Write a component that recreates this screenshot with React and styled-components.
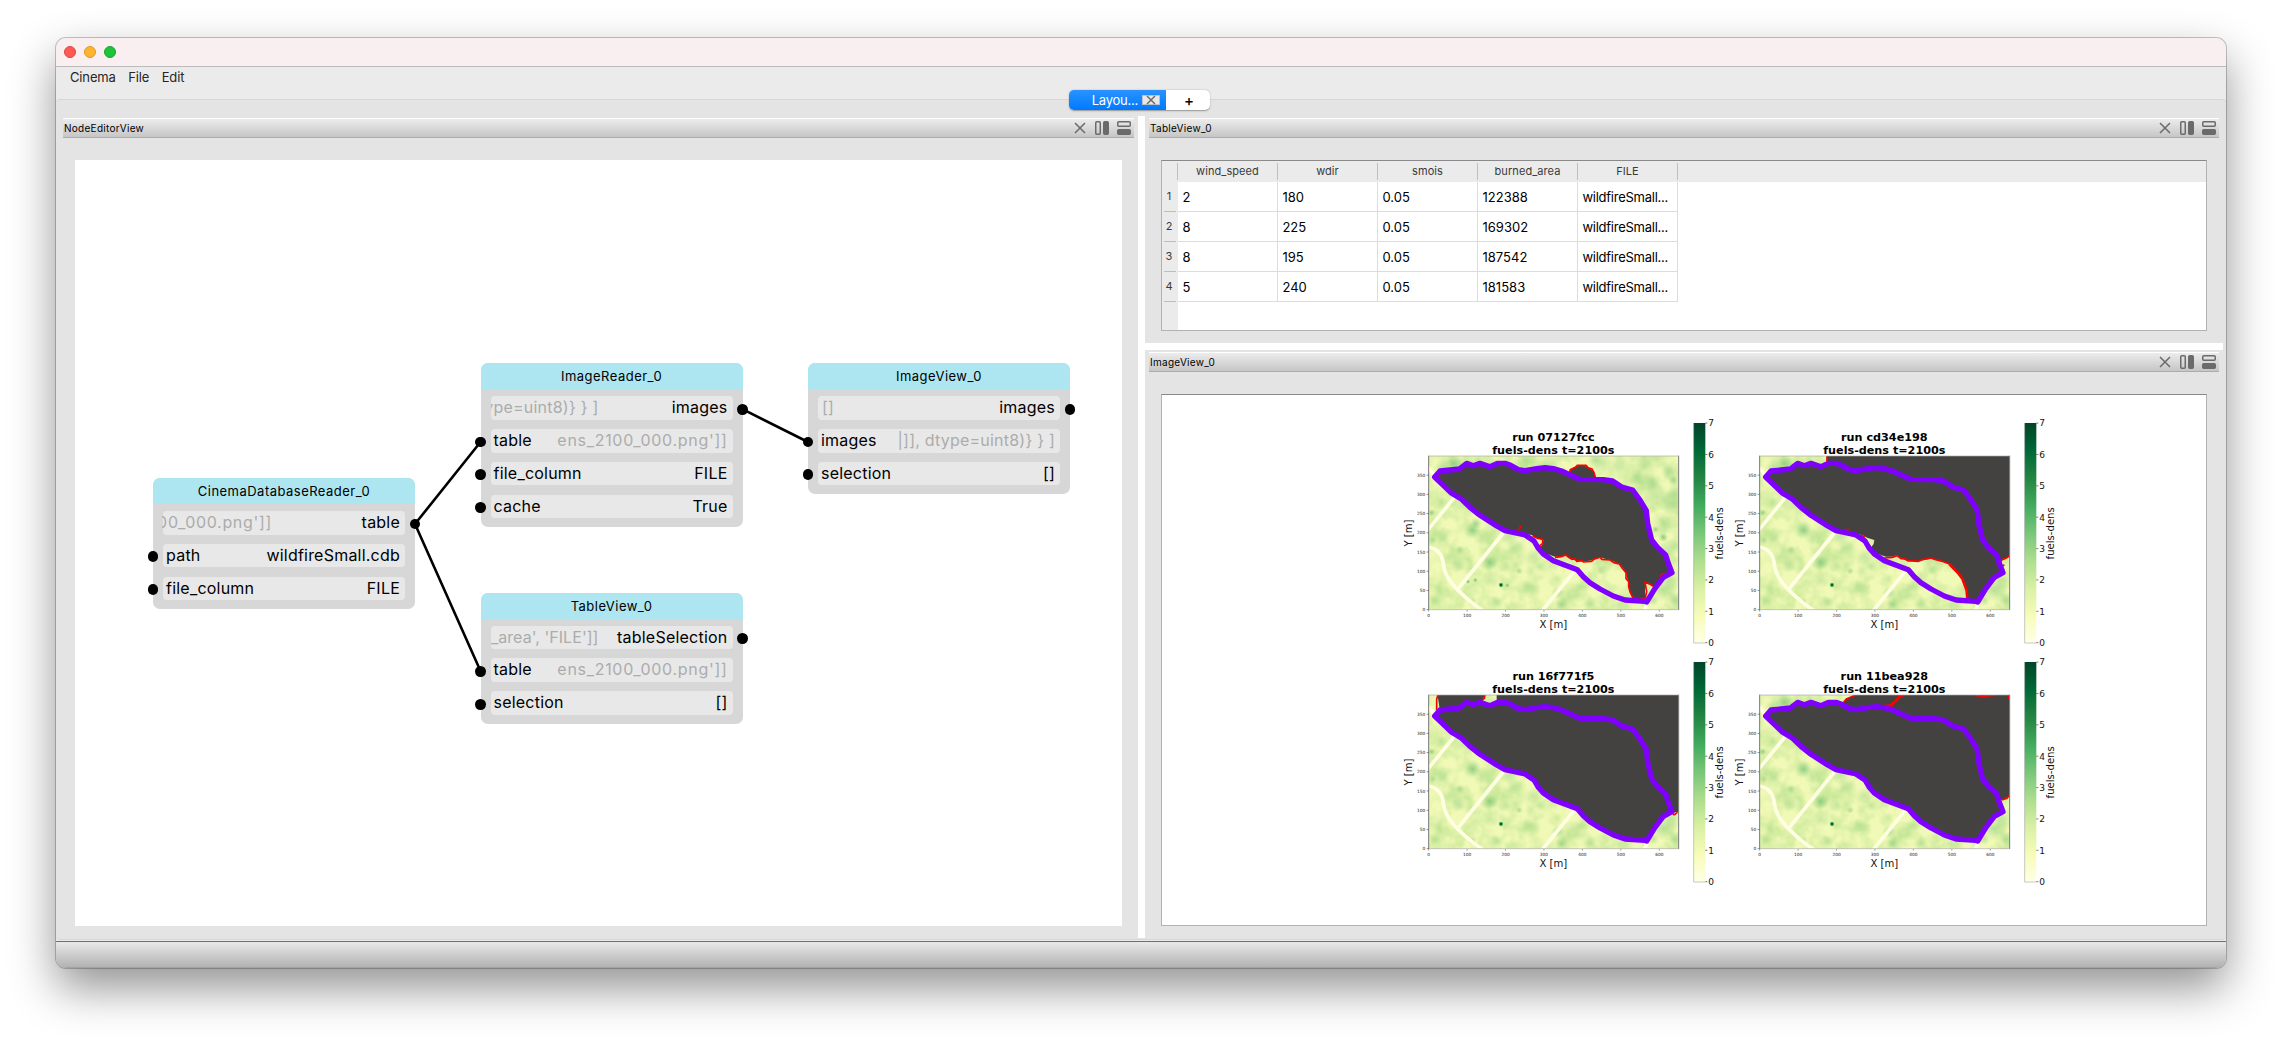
import React from 'react';
import styled, { createGlobalStyle } from 'styled-components';

const Global = createGlobalStyle`
  * { box-sizing: border-box; }
  body { margin: 0; background: #fff; font-family: Inter, "Liberation Sans", sans-serif; color: #000; }
`;

const Desktop = styled.div`
  width: 2282px;
  height: 1042px;
  padding: 38px 56px 74px;
  overflow: hidden;
`;

const Window = styled.div`
  display: flex;
  flex-direction: column;
  height: 930px;
  border-radius: 10px;
  background: #ebebeb;
  overflow: clip;
  box-shadow: 0 0 0 1px rgba(0, 0, 0, 0.22), 0 20px 46px rgba(0, 0, 0, 0.43);
`;

const TitleBar = styled.div`
  display: flex;
  align-items: center;
  gap: 8px;
  height: 29px;
  padding: 0 8px;
  background: #faeff0;
  border-bottom: 1px solid #bdbabb;
`;

const Light = styled.i`
  width: 12px;
  height: 12px;
  border-radius: 50%;
  background: ${(p) => p.$fill};
  border: 1px solid ${(p) => p.$edge};
`;

const MenuBar = styled.div`
  display: flex;
  gap: 12.5px;
  height: 32px;
  padding: 1px 14px;
  font-size: 13px;
  line-height: 18px;
  letter-spacing: -0.15px;
  color: #262626;
`;

const Pane = styled.div`
  position: relative;
  display: flex;
  flex: none;
  height: 841px;
  padding: 16px 3px 0 0;
  background: #e4e4e4;
  border: solid #d6d6d6;
  border-width: 1px 0;
  border-radius: 4px;
`;

const Tabs = styled.div`
  position: absolute;
  top: -10px;
  left: 1013px;
  display: flex;
  width: 141px;
  height: 20px;
  border-radius: 5px;
  background: #fff;
  box-shadow: 0 0.5px 1.5px rgba(0, 0, 0, 0.35);
  overflow: hidden;
`;

const ActiveTab = styled.div`
  display: flex;
  align-items: center;
  justify-content: flex-end;
  gap: 4px;
  width: 97px;
  padding-right: 6px;
  font-size: 13px;
  letter-spacing: -0.25px;
  color: #fff;
  background: linear-gradient(#2a93ff, #0079ff);
`;

const TabClose = styled.span`
  display: flex;
  align-items: center;
  justify-content: center;
  width: 18px;
  height: 10px;
  background: #e8e8e8;
  border: 1px solid #b9c0c8;
`;

const AddTab = styled.div`
  flex: 1;
  font-size: 15px;
  font-weight: 500;
  line-height: 21px;
  text-align: center;
  padding-left: 2px;
`;

const StatusBar = styled.div`
  flex: 1;
  margin-top: 1px;
  border-top: 1px solid #6e6e6e;
  border-bottom: 1px solid #a2a2a2;
  background: linear-gradient(#e9e9e9, #b2b2b2);
`;

const Column = styled.div`
  display: flex;
  flex-direction: column;
  width: 1078px;
`;

const SplitV = styled.div`
  width: 7px;
  margin-bottom: 1px;
  background: #fff;
`;

const SplitH = styled.div`
  height: 7px;
  background: #fff;
`;

const DockBox = styled.section`
  display: flex;
  flex-direction: column;
  width: ${(p) => p.$width || 'auto'};
  height: ${(p) => p.$height || 'auto'};
  flex: ${(p) => (p.$grow ? 1 : 'none')};
  padding: 2px 4px 0 ${(p) => p.$left || '4px'};
`;

const DockBar = styled.header`
  display: flex;
  align-items: center;
  gap: 8px;
  height: 20px;
  padding: 0 3px 0 1px;
  border-top: 1px solid #fff;
  border-bottom: 1px solid #acacac;
  background: linear-gradient(#ececec, #c6c6c6);
`;

const DockTitle = styled.h2`
  flex: 1;
  margin: 0;
  font-size: 10px;
  font-weight: 400;
  letter-spacing: 0.28px;
`;

const DockIcon = styled.svg`
  display: block;
  width: 14px;
  height: 14px;
  flex: none;
  fill: none;
  stroke: #6b6b6b;
  stroke-width: 1.5;
`;

const Content = styled.div`
  position: relative;
  flex: 1;
  margin: 22px 12px ${(p) => p.$bottom || '13px'};
  background: #fff;
  border: ${(p) => (p.$framed ? '1px solid #b2b2b2' : '0')};
  border-top-color: #8a8a8a;
`;

function Dock({ title, children, ...box }) {
  return (
    <DockBox {...box}>
      <DockBar>
        <DockTitle>{title}</DockTitle>
        <DockIcon viewBox="0 0 14 14"><path d="M2 2 12 12M12 2 2 12" /></DockIcon>
        <DockIcon viewBox="0 0 14 14">
          <rect x="0.75" y="0.75" width="4.5" height="12.5" rx="1" />
          <rect x="8.75" y="0.75" width="4.5" height="12.5" rx="1" fill="#6b6b6b" />
        </DockIcon>
        <DockIcon viewBox="0 0 14 14">
          <rect x="0.75" y="0.75" width="12.5" height="4.5" rx="1" />
          <rect x="0.75" y="8.75" width="12.5" height="4.5" rx="1" fill="#6b6b6b" />
        </DockIcon>
      </DockBar>
      {children}
    </DockBox>
  );
}

/* ---------- node editor ---------- */

const Wires = styled.svg`
  position: absolute;
  inset: 0;
  width: 1047px;
  height: 766px;
  stroke: #000;
  stroke-width: 2.6;
`;

const NodeBox = styled.div`
  position: absolute;
  left: ${(p) => p.$x}px;
  top: ${(p) => p.$y}px;
  width: 262px;
  padding-bottom: 9px;
  border-radius: 7px;
  background: #d7d7d7;
`;

const NodeTitle = styled.div`
  height: 26.4px;
  margin-bottom: 6.6px;
  border-radius: 7px 7px 0 0;
  background: #ade6f1;
  font-size: 13px;
  line-height: 27px;
  letter-spacing: 0.48px;
  text-align: center;
`;

const Port = styled.div`
  position: relative;
  display: flex;
  align-items: center;
  justify-content: space-between;
  height: 23.6px;
  margin: 0 10px 9.2px;
  padding: 0 5px 0.6px 3px;
  border-radius: 4px;
  background: #e8e8e8;
  font-size: 16px;
  line-height: 23px;
  letter-spacing: 0.22px;
  white-space: nowrap;
  &:last-child { margin-bottom: 0; }
  &::after {
    content: '';
    position: absolute;
    top: 7.6px;
    ${(p) => (p.$out ? 'right' : 'left')}: -15.4px;
    width: 10.8px;
    height: 10.8px;
    border-radius: 50%;
    background: #000;
  }
`;

const Value = styled.span`
  display: flex;
  justify-content: flex-end;
  color: ${(p) => (p.$dim ? '#acacac' : '#000')};
  width: ${(p) => (p.$clip ? `${p.$clip}px` : 'auto')};
  margin-left: ${(p) => p.$shift || 0}px;
  letter-spacing: ${(p) => p.$track || 0.22}px;
  overflow: hidden;
`;

const nodes = [
  { title: 'CinemaDatabaseReader_0', x: 78, y: 318, ports: [
    { out: true, name: 'table', value: "00_000.png']]", clip: 110, shift: -4, track: 0.68 },
    { name: 'path', value: 'wildfireSmall.cdb' },
    { name: 'file_column', value: 'FILE' },
  ] },
  { title: 'ImageReader_0', x: 405.5, y: 203.3, ports: [
    { out: true, name: 'images', value: 'ype=uint8)} } ]', clip: 108, shift: -3 },
    { name: 'table', value: "ens_2100_000.png']]", dim: true, track: 0.7 },
    { name: 'file_column', value: 'FILE' },
    { name: 'cache', value: 'True' },
  ] },
  { title: 'TableView_0', x: 405.5, y: 432.6, ports: [
    { out: true, name: 'tableSelection', value: "_area', 'FILE']]", clip: 108, shift: -3, track: 0.05 },
    { name: 'table', value: "ens_2100_000.png']]", dim: true, track: 0.7 },
    { name: 'selection', value: '[]' },
  ] },
  { title: 'ImageView_0', x: 733, y: 203.3, ports: [
    { out: true, name: 'images', value: '[]', shift: 1 },
    { name: 'images', value: '|]], dtype=uint8)} } ]', dim: true },
    { name: 'selection', value: '[]' },
  ] },
];

function NodeEditor() {
  return (
    <Content>
      {nodes.map((n) => (
        <NodeBox key={n.title} $x={n.x} $y={n.y}>
          <NodeTitle>{n.title}</NodeTitle>
          {n.ports.map((p, i) =>
            p.out ? (
              <Port key={i} $out>
                <Value $dim $clip={p.clip} $shift={p.shift} $track={p.track}>{p.value}</Value>
                <span>{p.name}</span>
              </Port>
            ) : (
              <Port key={i}>
                <span>{p.name}</span>
                <Value $dim={p.dim} $track={p.track}>{p.value}</Value>
              </Port>
            )
          )}
        </NodeBox>
      ))}
      <Wires viewBox="0 0 1047 766">
        <path d="M340 364 405.5 282M340 364 405.5 511M667.5 249.2 733 282" />
      </Wires>
    </Content>
  );
}

/* ---------- table ---------- */

const Grid = styled.div`
  display: grid;
  grid-template-columns: 16px repeat(5, 100px);
  grid-template-rows: 21px repeat(4, 30px) 1fr;
  height: 100%;
  background: linear-gradient(#ebebeb 21px, #fff 21px);
`;

const ColHead = styled.div`
  margin: 2px 0;
  font-size: 11px;
  line-height: 17px;
  text-align: center;
  color: #3a3a3a;
  letter-spacing: 0.08px;
  border-right: 1px solid #bfbfbf;
`;

const RowHead = styled.div`
  display: flex;
  align-items: center;
  justify-content: center;
  background: #ebebeb;
  padding: 0 2px;
  font-size: 11px;
  color: #3a3a3a;
  span {
    flex: 1;
    height: 30px;
    padding-right: 2px;
    line-height: 29px;
    text-align: center;
    border-bottom: 1px solid #bdbdbd;
  }
`;

const Cell = styled.div`
  padding-left: 4.4px;
  font-size: 13px;
  line-height: 30px;
  letter-spacing: ${(p) => (p.$tight ? '-0.25px' : '0.05px')};
  white-space: nowrap;
  border: solid #dcdcdc;
  border-width: 0 1px 1px 0;
`;

const columns = ['wind_speed', 'wdir', 'smois', 'burned_area', 'FILE'];
const rows = [
  ['2', '180', '0.05', '122388', 'wildfireSmall...'],
  ['8', '225', '0.05', '169302', 'wildfireSmall...'],
  ['8', '195', '0.05', '187542', 'wildfireSmall...'],
  ['5', '240', '0.05', '181583', 'wildfireSmall...'],
];

function Table() {
  return (
    <Content $framed $bottom="12px">
      <Grid>
        <ColHead />
        {columns.map((c) => <ColHead key={c}>{c}</ColHead>)}
        {rows.map((r, i) => (
          <React.Fragment key={i}>
            <RowHead><span>{i + 1}</span></RowHead>
            {r.map((v, j) => <Cell key={j} $tight={j === 4}>{v}</Cell>)}
          </React.Fragment>
        ))}
        <RowHead />
      </Grid>
    </Content>
  );
}

/* ---------- simulation images ---------- */

const Gallery = styled.div`
  display: grid;
  grid-template-columns: 331px 331px;
  grid-auto-rows: 239px;
  padding: 25px 0 0 238px;
`;

const Chart = styled.svg`
  display: block;
  width: 331px;
  height: 239px;
  overflow: visible;
  font-family: "DejaVu Sans", sans-serif;
`;

const perimeter =
  'M134 231 150 213 180 210 208 207 230 190 250 197 270 190 300 200 322 190 345 190 362 196 385 209 405 212 440 206 465 203 490 206 515 213 545 227 570 238 640 239 668 243 695 261 728 270 750 300 769 332 773 370 785 420 805 445 827 465 835 490 846 518 820 532 795 565 770 606 765 604 705 600 670 588 630 567 600 548 580 530 562 509 540 501 490 482 460 462 445 445 432 423 405 405 345 392 320 378 270 346 240 322 215 298 185 280 160 256Z';

const upper =
  'M134 231 150 213 208 207 230 190 250 197 270 190 300 200 322 190 345 190 385 209 405 212 440 206 465 203 515 213 570 238 668 243 695 261 728 270 769 332 785 420 827 465 846 518';
const lowerLeft =
  'L560 484 546 478 536 472 528 465 515 470 495 470 480 465 462 458 450 442 458 432 460 420 438 413 425 405 345 392 270 346 215 298 160 256Z';

const scars = {
  '07127fcc': {
    burned: [
      `${upper} L820 525 795 560 778 552 765 548 765 595 740 598 726 590 718 570 714 545 708 518 692 495 670 484 630 472 600 482 580 484 ${lowerLeft}`,
      'M538 222 542 210 552 202 575 195 596 202 612 215 616 232 600 240 570 240Z',
    ],
    flames: [
      'M538 218 541 209 556 202 562 196 588 196 594 203 606 207 612 218 616 232',
      'M383 390 388 388 392 378M428 408 440 414 458 418 458 430 449 437 456 456M495 472 514 470 528 465 536 472 546 478 556 476 560 484 575 482 580 486 604 484 612 478 630 472 636 478 660 480 672 488 688 492 698 506 708 518 708 535 716 545 716 560 720 575 728 592 740 597 765 597 770 575 765 547 780 553 795 562M810 530 816 522 828 520',
      'M145 226 150 230',
    ],
  },
  cd34e198: {
    burned: [
      'M134 231 150 213 208 207 230 190 270 190 300 200 317 188 317 168 866 168 866 468 842 482 846 518 795 565 770 600 738 598 736 570 725 540 708 515 685 492 660 484 630 476 600 482 580 484 ' + lowerLeft,
    ],
    flames: [
      'M318 169 318 184M370 390 385 388M420 404 432 412M490 474 514 472 528 467 540 476 552 476 560 482 592 484 606 478 630 474 642 478 664 484 685 492',
      'M842 480 856 474 866 468M846 498 850 494',
    ],
    wide: 'M685 492 698 506 712 520 724 536 730 552 737 572 739 598',
  },
  '16f771f5': {
    burned: [`${perimeter}`, 'M142 166 285 166 277 188 300 200 320 190 320 166 866 166 866 520 846 520 700 420 150 215Z'],
    flames: ['M144 168 140 180 140 214M285 168 283 178 276 184M848 526 854 527 862 520'],
  },
  '11bea928': {
    burned: [`${perimeter}`, 'M365 193 378 180 402 168 866 168 866 472 842 483 700 420 370 210Z'],
    flames: [
      'M366 192 376 180 390 174 402 169M488 202 508 202 514 192 528 186 530 178 545 170M762 170 780 171 786 174 800 170 822 169M842 483 858 478 866 468M864 170V180',
    ],
    wide: 'M490 201 512 199 526 184 534 174 546 168',
  },
};

/* x, y, radius, opacity */
const sparse = [
  [190, 190, 20, 0.55], [248, 390, 19, 0.6], [298, 487, 17, 0.6], [125, 338, 8, 0.6], [128, 420, 9, 0.4],
  [160, 415, 16, 0.25], [210, 450, 10, 0.4], [205, 497, 15, 0.3], [155, 310, 14, 0.25], [275, 420, 16, 0.2],
  [360, 410, 20, 0.3], [370, 440, 16, 0.25], [300, 540, 18, 0.22], [345, 500, 14, 0.25], [388, 513, 8, 0.45],
  [430, 470, 18, 0.25], [450, 500, 12, 0.25], [420, 560, 16, 0.2], [515, 612, 14, 0.4], [505, 580, 14, 0.3],
  [320, 605, 13, 0.28], [246, 604, 10, 0.38], [180, 470, 18, 0.15], [160, 202, 15, 0.25], [265, 178, 12, 0.3],
  [820, 570, 24, 0.38], [840, 540, 20, 0.3], [855, 600, 16, 0.3], [635, 510, 12, 0.25], [600, 610, 16, 0.25],
  [560, 570, 20, 0.14], [690, 615, 12, 0.22], [130, 600, 12, 0.2], [390, 440, 14, 0.2], [790, 600, 12, 0.35],
];
const dense = [
  ...sparse,
  [770, 190, 30, 0.22], [835, 215, 16, 0.4], [850, 240, 12, 0.5], [740, 235, 20, 0.35], [800, 290, 28, 0.3],
  [840, 310, 22, 0.3], [690, 200, 26, 0.25], [640, 190, 24, 0.25], [480, 190, 26, 0.25], [820, 370, 26, 0.28],
  [820, 412, 10, 0.7], [797, 388, 7, 0.6], [845, 440, 18, 0.3], [855, 280, 20, 0.3], [620, 180, 18, 0.3],
  [400, 182, 20, 0.25], [234, 545, 5, 0.9], [256, 540, 5, 0.9], [352, 556, 5, 0.8], [258, 370, 12, 0.5], [790, 250, 22, 0.3],
];

const yTicks = [0, 50, 100, 150, 200, 250, 300, 350];
const xTicks = [0, 100, 200, 300, 400, 500, 600];

function RunChart({ run, blots }) {
  const { burned, flames, wide } = scars[run];
  return (
    <Chart viewBox="30 60 993 717">
      <defs>
        <linearGradient id="ylgn" x1="0" y1="1" x2="0" y2="0">
          <stop offset="0" stopColor="#ffffe5" />
          <stop offset="0.125" stopColor="#f7fcb9" />
          <stop offset="0.25" stopColor="#d9f0a3" />
          <stop offset="0.375" stopColor="#addd8e" />
          <stop offset="0.5" stopColor="#78c679" />
          <stop offset="0.625" stopColor="#41ab5d" />
          <stop offset="0.75" stopColor="#238443" />
          <stop offset="0.875" stopColor="#006837" />
          <stop offset="1" stopColor="#004529" />
        </linearGradient>
        <radialGradient id="blot">
          <stop offset="0" stopColor="#62b968" />
          <stop offset="0.45" stopColor="#84c97c" stopOpacity="0.7" />
          <stop offset="1" stopColor="#addd8e" stopOpacity="0" />
        </radialGradient>
        <filter id="mottle" x="0" y="0" width="1" height="1" colorInterpolationFilters="sRGB">
          <feTurbulence type="fractalNoise" baseFrequency="0.018" numOctaves="3" seed="7" />
          <feColorMatrix values="0 0 0 0 0.76  0 0 0 0 0.9  0 0 0 0 0.58  2.2 0 0 0 -0.78" />
        </filter>
        <clipPath id="frame"><rect x="116" y="168" width="750" height="461" /></clipPath>
      </defs>

      <g clipPath="url(#frame)">
        <rect x="116" y="168" width="750" height="461" fill="#f1f9b6" />
        <rect x="116" y="168" width="750" height="461" filter="url(#mottle)" />
        {blots.map(([x, y, r, o]) => (
          <circle key={`${x}-${y}`} cx={x} cy={y} r={r * 1.5} opacity={o} fill="url(#blot)" />
        ))}
        <circle cx="333" cy="555" r="6.5" fill="#55b567" />
        <circle cx="333" cy="555" r="3.5" fill="#00592f" />
        <path
          d="M108 198 140 230M112 392 195 290M200 572 342 396M455 634 552 515M762 634 774 604M112 440C145 445 158 465 160 495 164 525 180 545 205 572 225 592 245 612 285 636"
          fill="none" stroke="#fefee2" strokeWidth="11"
        />
        {burned.map((d) => <path key={d} d={d} fill="#434240" />)}
        {flames.map((d) => <path key={d} d={d} fill="none" stroke="#f00" strokeWidth="5" />)}
        {wide && <path d={wide} fill="none" stroke="#f00" strokeWidth="8" />}
        <path d={perimeter} fill="none" stroke="#7f00ff" strokeWidth="16" strokeLinejoin="round" />
      </g>

      <path d="M116 167V630M866 167V630" stroke="#777" strokeWidth="3" />
      <path d="M116 168H866M116 629H866" stroke="#aaa" strokeWidth="2" />

      <g fontSize="13" fill="#222">
        {yTicks.map((t) => {
          const y = 629 - t * 1.153;
          return (
            <g key={t}>
              <path d={`M110 ${y}H116`} stroke="#555" strokeWidth="2" />
              <text x="106" y={y + 5} textAnchor="end">{t}</text>
            </g>
          );
        })}
        {xTicks.map((t) => {
          const x = 116 + t * 1.153;
          return (
            <g key={t}>
              <path d={`M${x} 630V635`} stroke="#777" strokeWidth="2" />
              <text x={x} y="650" textAnchor="middle">{t}</text>
            </g>
          );
        })}
      </g>

      <g fontWeight="700" fontSize="33.6" textAnchor="middle">
        <text x="490" y="122">run {run}</text>
        <text x="490" y="161">fuels-dens t=2100s</text>
      </g>
      <g fontSize="30.3" textAnchor="middle" fill="#111">
        <text x="490" y="683">X [m]</text>
        <text transform="translate(65 399) rotate(-90)">Y [m]</text>
        <text transform="translate(1000 400) rotate(-90)">fuels-dens</text>
      </g>

      <rect x="911" y="69" width="35" height="659" fill="url(#ylgn)" />
      <path d="M911 69V729H946" fill="none" stroke="#999" strokeWidth="2" opacity="0.8" />
      <g fontSize="27" fill="#111">
        {[0, 1, 2, 3, 4, 5, 6, 7].map((t) => (
          <g key={t}>
            <path d={`M946 ${728 - t * 94.1}H952`} stroke="#333" strokeWidth="2" />
            <text x="955" y={738 - t * 94.1}>{t}</text>
          </g>
        ))}
      </g>
    </Chart>
  );
}

function Images() {
  return (
    <Content $framed>
      <Gallery>
        <RunChart run="07127fcc" blots={dense} />
        <RunChart run="cd34e198" blots={sparse} />
        <RunChart run="16f771f5" blots={sparse} />
        <RunChart run="11bea928" blots={sparse} />
      </Gallery>
    </Content>
  );
}

export default function App() {
  return (
    <Desktop>
      <Global />
      <Window>
        <TitleBar>
          <Light $fill="#ff5a52" $edge="#e0443e" />
          <Light $fill="#ffb430" $edge="#dd9a2b" />
          <Light $fill="#1ec337" $edge="#17a62b" />
        </TitleBar>
        <MenuBar>
          <span>Cinema</span>
          <span>File</span>
          <span>Edit</span>
        </MenuBar>
        <Pane>
          <Tabs>
            <ActiveTab>
              Layou...
              <TabClose>
                <DockIcon viewBox="0 0 14 14"><path d="M3 3 11 11M11 3 3 11" /></DockIcon>
              </TabClose>
            </ActiveTab>
            <AddTab>+</AddTab>
          </Tabs>
          <Dock title="NodeEditorView" $width="1082px" $left="7px">
            <NodeEditor />
          </Dock>
          <SplitV />
          <Column>
            <Dock title="TableView_0" $height="227px">
              <Table />
            </Dock>
            <SplitH />
            <Dock title="ImageView_0" $grow>
              <Images />
            </Dock>
          </Column>
        </Pane>
        <StatusBar />
      </Window>
    </Desktop>
  );
}
